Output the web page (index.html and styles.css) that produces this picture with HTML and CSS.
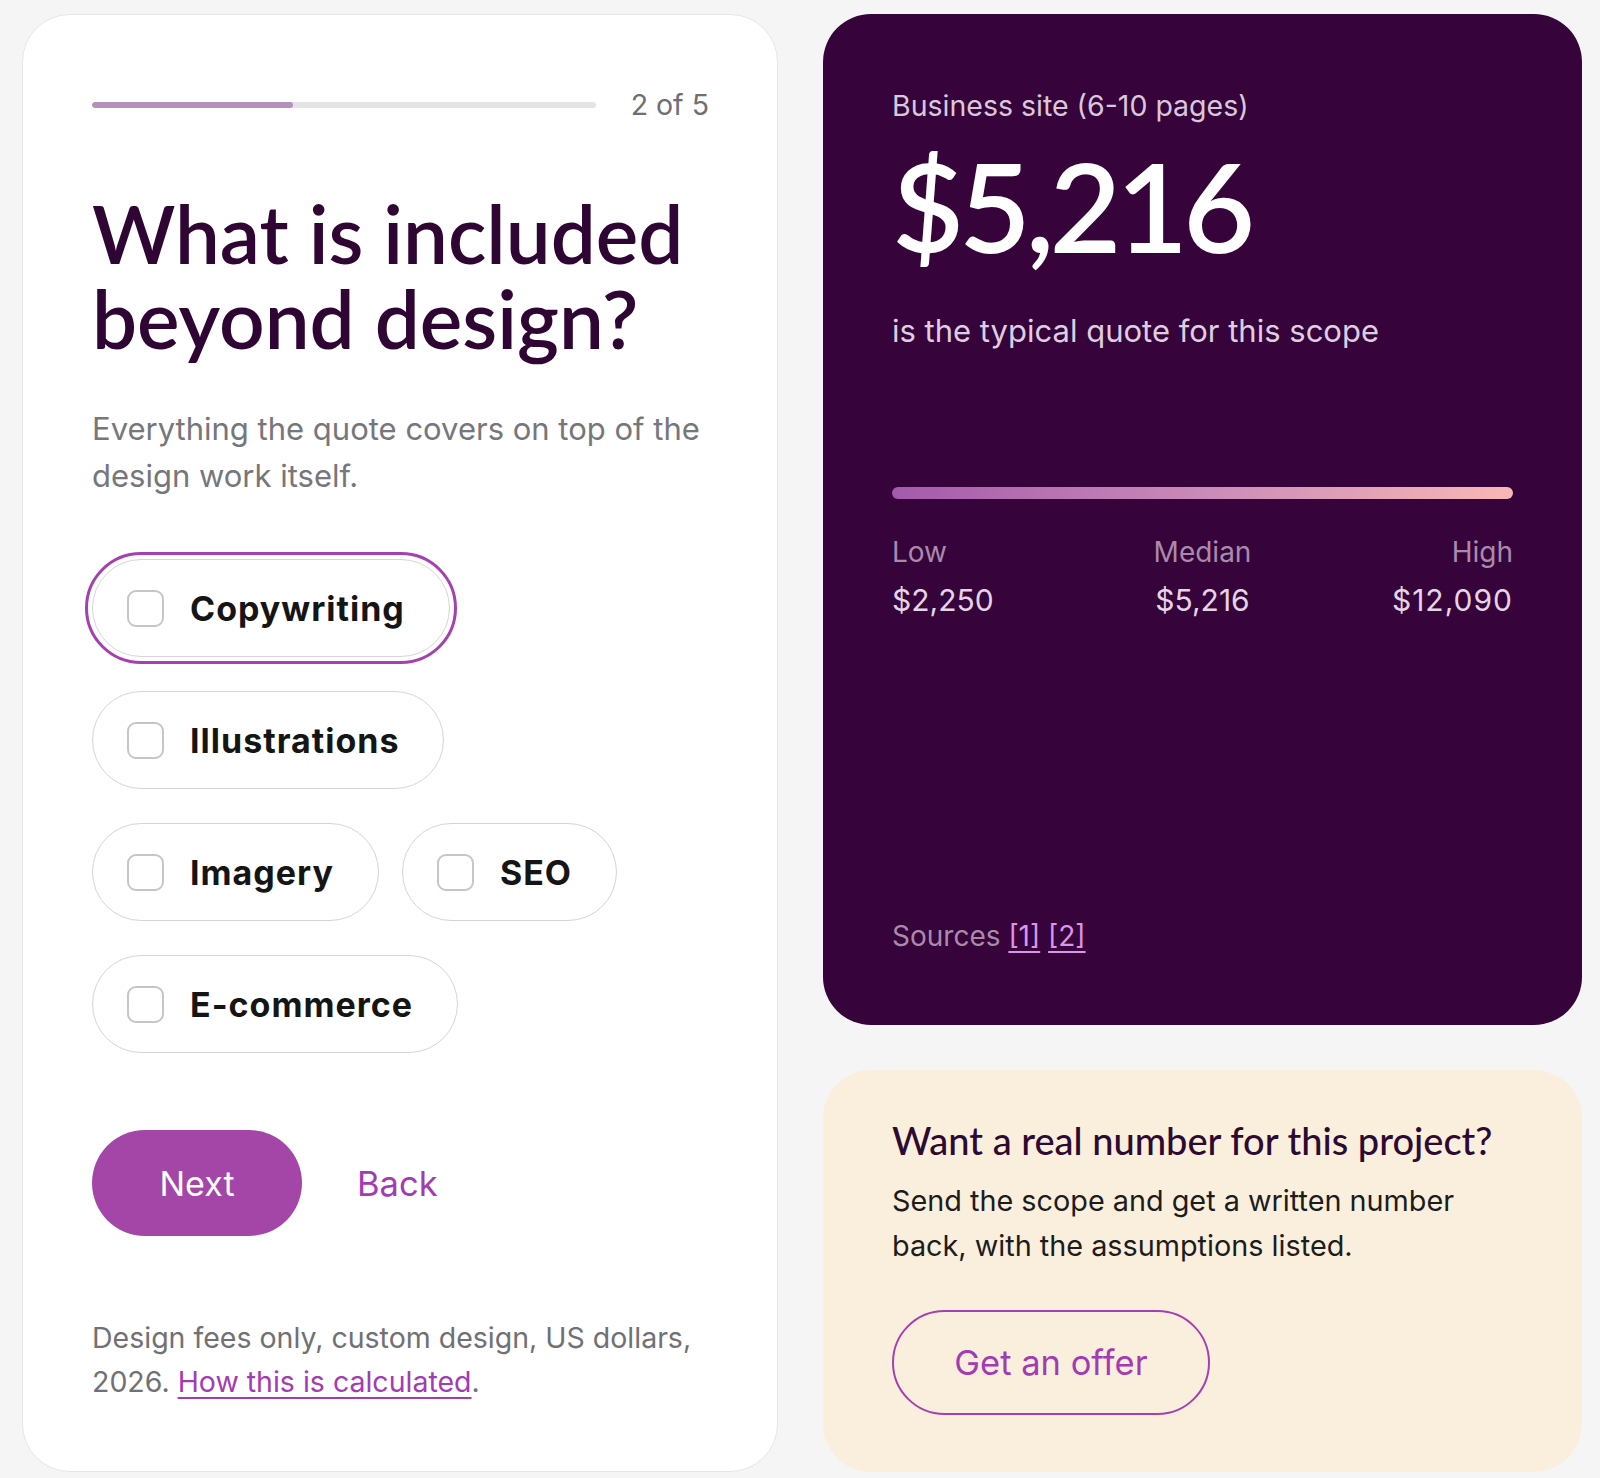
FILE: index.html
```html
<!DOCTYPE html>
<html lang="en">
<head>
<meta charset="utf-8">
<title>Quote estimator</title>
<link rel="stylesheet" href="styles.css">
</head>
<body>
<main class="page">
  <section class="quiz">
    <div class="progress-row">
      <div class="track"><div class="fill" style="width: 40%"></div></div>
      <span class="step">2 of 5</span>
    </div>
    <h1 class="title">What is included beyond design?</h1>
    <p class="lede">Everything the quote covers on top of the design work itself.</p>
    <div class="options">
      <label class="pill focused"><span class="box"></span><span class="pill-text">Copywriting</span></label>
      <label class="pill"><span class="box"></span><span class="pill-text">Illustrations</span></label>
      <label class="pill"><span class="box"></span><span class="pill-text">Imagery</span></label>
      <label class="pill"><span class="box"></span><span class="pill-text">SEO</span></label>
      <label class="pill"><span class="box"></span><span class="pill-text">E-commerce</span></label>
    </div>
    <div class="actions">
      <button class="btn-next">Next</button>
      <button class="btn-back">Back</button>
    </div>
    <p class="note">Design fees only, custom design, US dollars, 2026. <a href="#" class="note-link">How this is calculated</a>.</p>
  </section>
  <aside class="side">
    <section class="result">
      <p class="scope">Business site (6-10 pages)</p>
      <p class="price">$5,216</p>
      <p class="tagline">is the typical quote for this scope</p>
      <div class="range-bar"></div>
      <div class="range">
        <div class="range-col"><span class="range-label">Low</span><span class="range-value">$2,250</span></div>
        <div class="range-col center"><span class="range-label">Median</span><span class="range-value">$5,216</span></div>
        <div class="range-col right"><span class="range-label">High</span><span class="range-value">$12,090</span></div>
      </div>
      <p class="sources">Sources <a href="#" class="src">[1]</a> <a href="#" class="src">[2]</a></p>
    </section>
    <section class="offer">
      <h2 class="offer-title">Want a real number for this project?</h2>
      <p class="offer-text">Send the scope and get a written number back, with the assumptions listed.</p>
      <button class="btn-offer">Get an offer</button>
    </section>
  </aside>
</main>
</body>
</html>
```
FILE: styles.css
```css
* { box-sizing: border-box; }
html, body { margin: 0; padding: 0; }
body {
  background: #f5f5f6;
  font-family: "Inter", "Liberation Sans", sans-serif;
  color: #1a1a1a;
}
p { margin: 0; }
h1, h2 { margin: 0; font-weight: normal; }
button { font-family: inherit; cursor: pointer; }

.page {
  display: grid;
  grid-template-columns: 756px 759px;
  column-gap: 45px;
  padding: 14px 18px 6px 22px;
}

/* left card */
.quiz {
  background: #fff;
  border: 1px solid #e6e6e9;
  border-radius: 48px;
  padding: 70px 68px 68px 69px;
  display: flex;
  flex-direction: column;
}
.progress-row {
  display: flex;
  align-items: center;
  gap: 35px;
  height: 40px;
}
.track {
  flex: 1;
  height: 6px;
  border-radius: 3px;
  background: #e4e4e7;
  overflow: hidden;
}
.fill {
  height: 100%;
  background: #b491bb;
  border-radius: 3px;
}
.step {
  font-size: 28.5px;
  color: #6e6e73;
  line-height: 40px;
}
.title {
  margin-top: 66px;
  font-family: "Lato", sans-serif;
  font-weight: 600;
  font-size: 80px;
  line-height: 85px;
  color: #2f0533;
}
.lede {
  margin-top: 44px;
  font-size: 31px;
  line-height: 47px;
  color: #76767b;
}
.options {
  margin-top: 60px;
  display: flex;
  flex-wrap: wrap;
  row-gap: 34px;
  column-gap: 23px;
  align-items: flex-start;
}
.pill {
  display: inline-flex;
  align-items: center;
  gap: 26px;
  height: 98px;
  padding: 0 44px 0 34px;
  border: 1.5px solid #d5d5d9;
  border-radius: 49px;
  background: #fff;
}
.pill.focused {
  outline: 3px solid #a540b0;
  outline-offset: 4px;
}
.box {
  width: 37px;
  height: 37px;
  border: 2.5px solid #c6c6ca;
  border-radius: 9px;
  flex: none;
}
.pill-text {
  font-size: 34px;
  font-weight: 700;
  letter-spacing: 1px;
  color: #151515;
}
.actions {
  margin-top: 77px;
  display: flex;
  align-items: center;
  gap: 55px;
}
.btn-next {
  width: 210px;
  height: 106px;
  border: none;
  border-radius: 53px;
  background: #a445a8;
  color: #fff;
  font-size: 34px;
}
.btn-back {
  border: none;
  background: none;
  padding: 0;
  color: #a33bb3;
  font-size: 34.5px;
}
.note {
  margin-top: 80px;
  font-size: 28.5px;
  line-height: 43.5px;
  color: #707075;
}
.note-link {
  color: #a33bb3;
  text-decoration: underline;
  text-decoration-thickness: 2px;
  text-underline-offset: 5px;
}

/* right column */
.side {
  display: flex;
  flex-direction: column;
  gap: 45px;
}
.result {
  flex: 1;
  background: #36033a;
  border-radius: 48px;
  padding: 72px 69px 69px 69px;
  display: flex;
  flex-direction: column;
}
.scope {
  font-size: 28.5px;
  line-height: 39px;
  color: #d8c8da;
}
.price {
  margin-top: 17px;
  font-family: "Lato", sans-serif;
  font-weight: 600;
  font-size: 124px;
  line-height: 126px;
  color: #ffffff;
  letter-spacing: -5px;
}
.tagline {
  margin-top: 42px;
  font-size: 31px;
  line-height: 41px;
  color: #ddcfe0;
}
.range-bar {
  margin-top: 136px;
  height: 12px;
  border-radius: 6px;
  background: linear-gradient(90deg, #a45aab 0%, #c98bb8 50%, #f8b8b5 100%);
}
.range {
  margin-top: 34px;
  display: grid;
  grid-template-columns: 1fr 1fr 1fr;
}
.range-col {
  display: flex;
  flex-direction: column;
  align-items: flex-start;
  gap: 8px;
}
.range-col.center { align-items: center; }
.range-col.right { align-items: flex-end; }
.range-label {
  font-size: 28px;
  line-height: 39px;
  color: #a98aab;
}
.range-value {
  font-size: 30px;
  line-height: 41px;
  color: #e3d5e5;
}
.range-col.right .range-value { letter-spacing: 1px; }
.sources {
  margin-top: auto;
  font-size: 28px;
  line-height: 39px;
  color: #a98aab;
}
.src {
  color: #dd92ec;
  text-decoration: underline;
  text-underline-offset: 5px;
}

.offer {
  background: #faefdc;
  border-radius: 48px;
  padding: 47px 69px 57px 69px;
}
.offer-title {
  font-family: "Lato", sans-serif;
  font-weight: 500;
  font-size: 38px;
  line-height: 46px;
  color: #2d0a31;
}
.offer-text {
  margin-top: 15px;
  font-size: 28.8px;
  line-height: 45px;
  color: #1c1c1c;
}
.btn-offer {
  margin-top: 42px;
  width: 318px;
  height: 105px;
  border: 2px solid #a540b0;
  border-radius: 53px;
  background: transparent;
  color: #a33bb3;
  font-size: 34.5px;
}
```
